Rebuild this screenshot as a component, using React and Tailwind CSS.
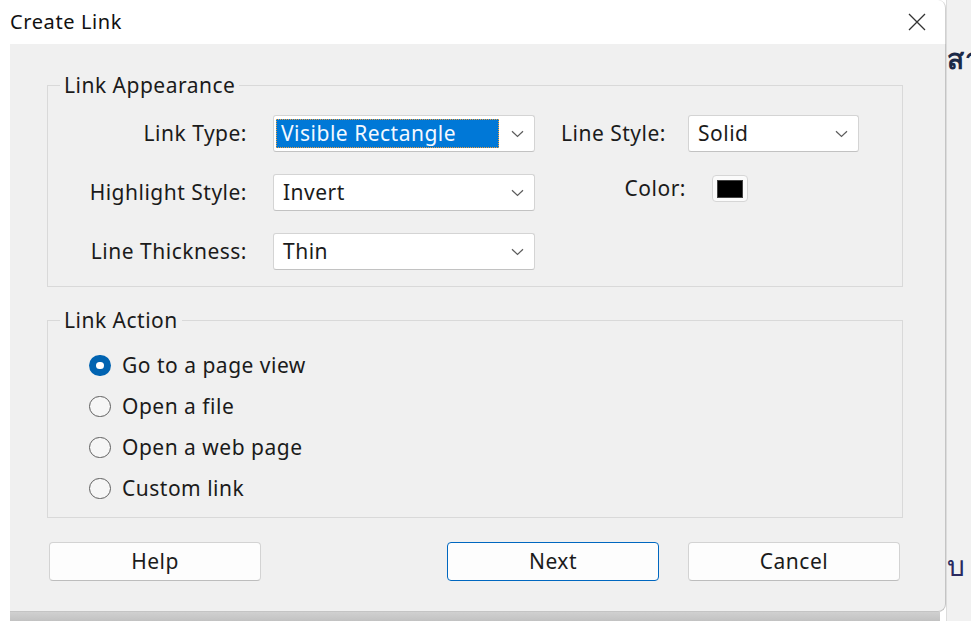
import React from "react";

function Chevron() {
  return (
    <svg width="13" height="8" viewBox="0 0 13 8" className="shrink-0">
      <path d="M1 1.2 L6.5 6.5 L12 1.2" fill="none" stroke="#5c5c5c" strokeWidth="1.2" />
    </svg>
  );
}

function Select({ value, width, selected }) {
  return (
    <div
      className={`h-[37px] ${width} bg-white border border-[#d4d4d4] border-b-[#c2c2c2] rounded-[3px] flex items-center justify-between pr-[10px]`}
    >
      {selected ? (
        <div className="ml-[2px] h-[29px] w-[223px] bg-[#0078d7] border border-dotted border-[#f0a040] flex items-center pl-[4px] text-[#f4f8ff] whitespace-nowrap">
          {value}
        </div>
      ) : (
        <span className="pl-[9px]">{value}</span>
      )}
      <Chevron />
    </div>
  );
}

function Legend({ children }) {
  return (
    <div className="-mt-[13px] ml-[12px] px-[4px] w-fit h-[24px] leading-[24px] bg-[#f0f0f0]">
      {children}
    </div>
  );
}

function Radio({ label, checked }) {
  return (
    <div className="h-[41px] flex items-center pl-[41px]">
      {checked ? (
        <div className="w-[22px] h-[21px] rounded-full bg-[#0063b1] flex items-center justify-center">
          <div className="w-[8px] h-[7px] rounded-full bg-white" />
        </div>
      ) : (
        <div className="w-[22px] h-[21px] rounded-full border-[1.5px] border-[#5f5f5f] bg-[#f6f6f6]" />
      )}
      <span className="ml-[11px]">{label}</span>
    </div>
  );
}

function Button({ label, primary }) {
  return (
    <div
      className={`w-[212px] h-[39px] rounded-[4px] bg-[#fdfdfd] flex items-center justify-center ${
        primary ? "border border-[#0067c0]" : "border border-[#d3d3d3] border-b-[#bdbdbd]"
      }`}
    >
      {label}
    </div>
  );
}

export default function App() {
  return (
    <div className="w-[971px] h-[621px] overflow-hidden bg-white flex font-['Noto_Sans','Open_Sans',sans-serif] text-[21px] tracking-[0.5px] text-[#1b1b1b]">
      {/* dialog window */}
      <div className="w-[946px] h-full flex flex-col shrink-0">
        <div className="h-[44px] bg-white rounded-tr-[8px] border-r border-[#d0d0d0] flex items-center justify-between pl-[10px] pr-[19px]">
          <span className="text-[20px] tracking-[0.6px] text-[#111]">Create Link</span>
          <svg width="18" height="18" viewBox="0 0 18 18">
            <path d="M1 1 L17 17 M17 1 L1 17" stroke="#333" strokeWidth="1.3" />
          </svg>
        </div>
        <div className="flex-1 ml-[10px] bg-[#f0f0f0] border-r border-b border-[#c4c4c4] rounded-br-[8px] flex flex-col pt-[41px] pl-[37px] pr-[42px]">
          {/* Link Appearance */}
          <div className="border border-[#d9d9d9] flex flex-col pb-[16px]">
            <Legend>Link Appearance</Legend>
            <div className="mt-[18px] flex flex-col gap-[22px]">
              <div className="flex items-center">
                <div className="w-[199px] text-right">Link Type:</div>
                <div className="ml-[26px]">
                  <Select value="Visible Rectangle" width="w-[262px]" selected />
                </div>
                <div className="w-[153px] pl-[26px] whitespace-nowrap">Line Style:</div>
                <Select value="Solid" width="w-[171px]" />
              </div>
              <div className="flex items-center">
                <div className="w-[199px] text-right">Highlight Style:</div>
                <div className="ml-[26px]">
                  <Select value="Invert" width="w-[262px]" />
                </div>
                <div className="self-start mt-[1px] h-[27px] flex items-center">
                  <div className="w-[151px] text-right">Color:</div>
                  <div className="ml-[26px] w-[36px] h-[27px] rounded-[4px] bg-[#fbfbfb] border border-[#d6d6d6] flex items-center justify-center">
                    <div className="w-[26px] h-[18px] bg-black border border-[#444]" />
                  </div>
                </div>
              </div>
              <div className="flex items-center">
                <div className="w-[199px] text-right">Line Thickness:</div>
                <div className="ml-[26px]">
                  <Select value="Thin" width="w-[262px]" />
                </div>
              </div>
            </div>
          </div>

          {/* Link Action */}
          <div className="mt-[33px] border border-[#d9d9d9] flex flex-col pb-[8px]">
            <Legend>Link Action</Legend>
            <div className="mt-[13px] flex flex-col">
              <Radio label="Go to a page view" checked />
              <Radio label="Open a file" />
              <Radio label="Open a web page" />
              <Radio label="Custom link" />
            </div>
          </div>

          {/* buttons */}
          <div className="mt-[24px] flex pl-[2px] pr-[3px]">
            <Button label="Help" />
            <div className="ml-auto">
              <Button label="Next" primary />
            </div>
            <div className="ml-[29px]">
              <Button label="Cancel" />
            </div>
          </div>
        </div>
        <div className="h-[9px] ml-[10px] mr-[6px] bg-gradient-to-b from-[#d0d0d0] to-[#c2c2c2]" />
      </div>

      {/* page behind the dialog */}
      <div className="flex-1 bg-[#f1f1f1] border-l border-[#dcdcdc] flex flex-col overflow-hidden">
        <div className="mt-[44px] h-[32px] leading-[32px] text-[28px] font-bold text-[#1c2a48] whitespace-nowrap font-['DejaVu_Sans',sans-serif]">
          สา
        </div>
        <div className="mt-auto mb-[38px] h-[26px] overflow-hidden text-[28px] leading-[20px] text-[#2a2a60] whitespace-nowrap font-['DejaVu_Sans',sans-serif]">
          บ
        </div>
      </div>
    </div>
  );
}
